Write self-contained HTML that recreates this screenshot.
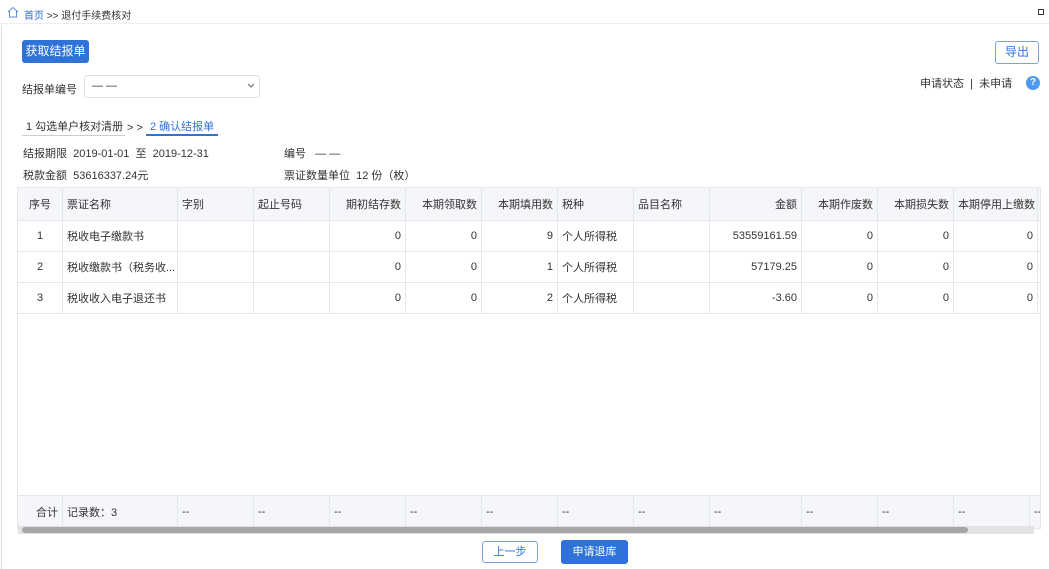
<!DOCTYPE html>
<html><head><meta charset="utf-8"><style>
*{box-sizing:border-box;margin:0;padding:0}
body{width:1049px;height:569px;overflow:hidden;background:#fff;font-family:"Liberation Sans","Noto Sans CJK SC",sans-serif;font-size:11px;color:#333;position:relative}
.a{position:absolute;white-space:nowrap}
table{border-collapse:collapse;table-layout:fixed;position:absolute;left:17px;top:187px;width:1023px}
td{border:1px solid #e3e6eb;height:31px;padding:0 4px;overflow:hidden;white-space:nowrap;font-size:11px}
tr.h td{background:#f4f6f9;height:33px}
.r{text-align:right}.c{text-align:center}
</style></head><body>
<div class="a" style="left:0;top:0;width:1049px;height:24px;border-bottom:1px solid #eceef1"></div>
<svg class="a" style="left:7px;top:6px" width="12" height="12" viewBox="0 0 12 12"><path d="M1 6 L6 1.5 L11 6 M2.5 5 V11 H9.5 V5" fill="none" stroke="#5a8fd6" stroke-width="1"/></svg>
<div class="a" style="left:24px;top:7px;font-size:10px"><span style="color:#2c6fd1">首页</span> &gt;&gt; 退付手续费核对</div>
<div class="a" style="left:1038px;top:9px;width:6px;height:6px;border:1px solid #333"></div>
<div class="a" style="left:1px;top:25px;width:1px;height:544px;background:#ddd"></div>
<div class="a" style="left:22px;top:40px;width:67px;height:23px;background:#2f72d8;border-radius:3px;color:#fff;font-size:12px;line-height:23px;text-align:center">获取结报单</div>
<div class="a" style="left:995px;top:41px;width:44px;height:23px;border:1px solid #7aa3e0;border-radius:3px;color:#2f72d8;font-size:12px;line-height:21px;text-align:center">导出</div>
<div class="a" style="left:22px;top:81px;font-size:11px">结报单编号</div>
<div class="a" style="left:84px;top:75px;width:176px;height:23px;border:1px solid #dcdfe5;border-radius:3px"></div>
<div class="a" style="left:92px;top:80px">— —</div>
<svg class="a" style="left:247px;top:83px" width="8" height="6"><path d="M1 1 L4 4 L7 1" fill="none" stroke="#666"/></svg>
<div class="a" style="left:920px;top:75px">申请状态 &nbsp;|&nbsp; 未申请</div>
<div class="a" style="left:1026px;top:76px;width:14px;height:14px;border-radius:50%;background:#4b9af0;color:#fff;font-size:10px;font-weight:bold;text-align:center;line-height:14px">?</div>
<div class="a" style="left:26px;top:118px">1 勾选单户核对清册</div>
<div class="a" style="left:22px;top:135px;width:103px;height:1px;background:#ccc"></div>
<div class="a" style="left:127px;top:122px">&gt; &gt;</div>
<div class="a" style="left:150px;top:118px;color:#2f72d8">2 确认结报单</div>
<div class="a" style="left:146px;top:134px;width:72px;height:2px;background:#2f72d8"></div>
<div class="a" style="left:23px;top:145px">结报期限 &nbsp;2019-01-01 &nbsp;至 &nbsp;2019-12-31</div>
<div class="a" style="left:284px;top:145px">编号 &nbsp;&nbsp;— —</div>
<div class="a" style="left:23px;top:167px">税款金额 &nbsp;53616337.24元</div>
<div class="a" style="left:284px;top:167px">票证数量单位 &nbsp;12 份（枚）</div>
<div class="a" style="left:17px;top:187px;width:1024px;height:338px;border:1px solid #e3e6eb;border-top:none"></div>
<table>
<colgroup><col style="width:45px"><col style="width:115px"><col style="width:76px"><col style="width:76px"><col style="width:76px"><col style="width:76px"><col style="width:76px"><col style="width:76px"><col style="width:76px"><col style="width:92px"><col style="width:76px"><col style="width:76px"><col style="width:84px"><col style="width:3px"></colgroup>
<tr class="h"><td class="c">序号</td><td>票证名称</td><td>字别</td><td>起止号码</td><td class="r">期初结存数</td><td class="r">本期领取数</td><td class="r">本期填用数</td><td>税种</td><td>品目名称</td><td class="r">金额</td><td class="r">本期作废数</td><td class="r">本期损失数</td><td class="r">本期停用上缴数</td><td></td></tr>
<tr><td class="c">1</td><td>税收电子缴款书</td><td></td><td></td><td class="r">0</td><td class="r">0</td><td class="r">9</td><td>个人所得税</td><td></td><td class="r">53559161.59</td><td class="r">0</td><td class="r">0</td><td class="r">0</td><td></td></tr>
<tr><td class="c">2</td><td>税收缴款书（税务收...</td><td></td><td></td><td class="r">0</td><td class="r">0</td><td class="r">1</td><td>个人所得税</td><td></td><td class="r">57179.25</td><td class="r">0</td><td class="r">0</td><td class="r">0</td><td></td></tr>
<tr><td class="c">3</td><td>税收收入电子退还书</td><td></td><td></td><td class="r">0</td><td class="r">0</td><td class="r">2</td><td>个人所得税</td><td></td><td class="r">-3.60</td><td class="r">0</td><td class="r">0</td><td class="r">0</td><td></td></tr>
</table>
<table style="top:495px;width:1023px">
<colgroup><col style="width:45px"><col style="width:115px"><col style="width:76px"><col style="width:76px"><col style="width:76px"><col style="width:76px"><col style="width:76px"><col style="width:76px"><col style="width:76px"><col style="width:92px"><col style="width:76px"><col style="width:76px"><col style="width:76px"><col style="width:11px"></colgroup>
<tr class="h"><td class="r" style="height:30px">合计</td><td>记录数：3</td><td>--</td><td>--</td><td>--</td><td>--</td><td>--</td><td>--</td><td>--</td><td>--</td><td>--</td><td>--</td><td>--</td><td>--</td></tr>
</table>
<div class="a" style="left:18px;top:526px;width:1016px;height:8px;background:#e2e2e2"></div>
<div class="a" style="left:22px;top:527px;width:946px;height:6px;background:#a5a5a5;border-radius:3px"></div>
<div class="a" style="left:482px;top:541px;width:56px;height:22px;border:1px solid #7aa3e0;border-radius:3px;color:#2f72d8;text-align:center;line-height:20px">上一步</div>
<div class="a" style="left:561px;top:540px;width:67px;height:24px;background:#2f72d8;border-radius:3px;color:#fff;text-align:center;line-height:24px">申请退库</div>
</body></html>
